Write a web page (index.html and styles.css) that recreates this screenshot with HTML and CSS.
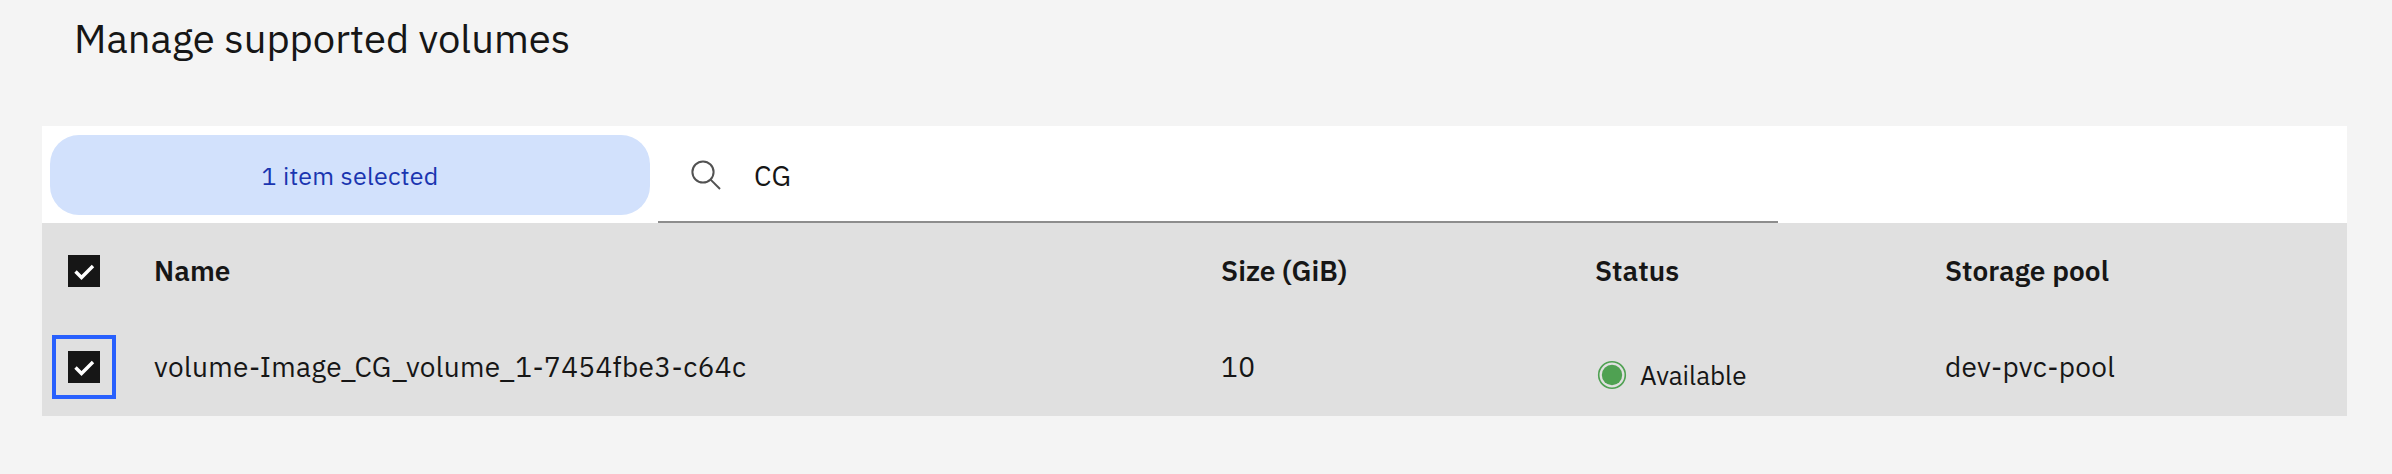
FILE: index.html
```html
<!DOCTYPE html>
<html lang="en">
<head>
    <meta charset="UTF-8">
    <meta name="viewport" content="width=device-width, initial-scale=1.0">
    <title>Manage supported volumes</title>
    <link rel="stylesheet" href="styles.css">
</head>
<body>
    <header>
        <h1>Manage supported volumes</h1>
    </header>
    <main>
        <div class="toolbar">
            <div class="selected-count">1 item selected</div>
            <div class="search">
                <svg class="search-icon" viewBox="0 0 30 30">
                    <circle cx="12" cy="12" r="10.6"/>
                    <path d="M19.6 19.6L29 29"/>
                </svg>
                <span class="search-text">CG</span>
            </div>
        </div>
        <table class="volumes">
            <colgroup>
                <col class="col-check">
                <col class="col-name">
                <col class="col-size">
                <col class="col-status">
                <col>
            </colgroup>
            <thead>
                <tr>
                    <th>
                        <div class="checkbox">
                            <svg viewBox="0 0 32 32"><path d="M7.5 16.5L13.5 22.5L25 11"/></svg>
                        </div>
                    </th>
                    <th>Name</th>
                    <th>Size (GiB)</th>
                    <th>Status</th>
                    <th>Storage pool</th>
                </tr>
            </thead>
            <tbody>
                <tr>
                    <td>
                        <div class="checkbox focused">
                            <svg viewBox="0 0 32 32"><path d="M7.5 16.5L13.5 22.5L25 11"/></svg>
                        </div>
                    </td>
                    <td>volume-Image_CG_volume_1-7454fbe3-c64c</td>
                    <td>10</td>
                    <td>
                        <div class="status">
                            <svg class="status-icon" viewBox="0 0 30 30">
                                <circle class="ring" cx="15" cy="15" r="13.3"/>
                                <circle class="dot" cx="15" cy="15" r="10.2"/>
                            </svg>
                            <span class="status-text">Available</span>
                        </div>
                    </td>
                    <td>dev-pvc-pool</td>
                </tr>
            </tbody>
        </table>
    </main>
</body>
</html>
```
FILE: styles.css
```css
body {
    font-family: "IBM Plex Sans", Roboto, sans-serif;
    margin: 0;
    background-color: #f4f4f4;
    color: #161616;
}

header {
    height: 126px;
    padding-left: 74px;
}

h1 {
    margin: 0;
    font-size: 40px;
    font-weight: 400;
    line-height: 77px;
}

main {
    width: 2305px;
    margin-left: 42px;
}

.toolbar {
    display: flex;
    height: 97px;
    background-color: #fff;
}

.selected-count {
    width: 600px;
    height: 80px;
    margin: 9px 8px 0;
    border-radius: 29px;
    background-color: #d2e1fc;
    color: #1a35b0;
    font-size: 25px;
    letter-spacing: 0.25px;
    line-height: 82px;
    text-align: center;
}

.search {
    box-sizing: border-box;
    display: flex;
    align-items: center;
    width: 1120px;
    height: 97px;
    padding: 3px 0 0 33px;
    border-bottom: 2px solid #8d8d8d;
    font-size: 28px;
    letter-spacing: 0.5px;
}

.search-icon {
    width: 30px;
    height: 30px;
    margin-right: 33px;
    fill: none;
    stroke: #525252;
    stroke-width: 2;
}

.volumes {
    width: 100%;
    table-layout: fixed;
    border-collapse: collapse;
    background-color: #e0e0e0;
    font-size: 28px;
    letter-spacing: 0.35px;
}

.col-check {
    width: 112px;
}

.col-name {
    width: 1067px;
}

.col-size {
    width: 374px;
}

.col-status {
    width: 350px;
}

th, td {
    box-sizing: border-box;
    height: 96px;
    padding: 0 0 4px;
    text-align: left;
    vertical-align: middle;
    white-space: nowrap;
}

th {
    height: 97px;
    padding-bottom: 2px;
    font-weight: 600;
    letter-spacing: 0.05px;
}

.checkbox {
    width: 32px;
    height: 32px;
    margin-left: 26px;
    background-color: #161616;
}

.checkbox svg {
    display: block;
    fill: none;
    stroke: #fff;
    stroke-width: 3.4;
}

.focused {
    margin-top: 2px;
    outline: 4px solid #2860fd;
    outline-offset: 12px;
}

.status {
    display: flex;
    align-items: center;
    padding: 18px 0 0 2px;
    font-size: 26px;
    letter-spacing: 0;
}

.status-icon {
    width: 30px;
    height: 30px;
    margin-right: 13px;
}

.ring {
    fill: none;
    stroke: #4fa152;
    stroke-width: 1.6;
}

.dot {
    fill: #4fa152;
}
```
